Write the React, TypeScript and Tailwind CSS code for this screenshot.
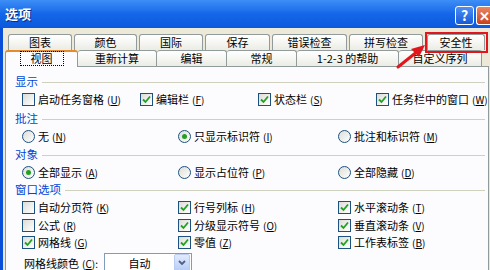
import React from 'react'

const font = { fontFamily: '"Noto Sans CJK SC", "Liberation Sans", sans-serif' }

const row1 = [
	{ label: '图表', w: 64 },
	{ label: '颜色', w: 63 },
	{ label: '国际', w: 64 },
	{ label: '保存', w: 65 },
	{ label: '错误检查', w: 75 },
	{ label: '拼写检查', w: 74 },
]

const row2 = [
	{ label: '重新计算', w: 79 },
	{ label: '编辑', w: 70 },
	{ label: '常规', w: 70 },
	{ label: '1-2-3 的帮助', w: 102 },
	{ label: '自定义序列', w: 83 },
]

const Label = ({ text, k }: { text: string; k: string }) => (
	<span className="whitespace-nowrap text-[11px] leading-none text-black">
		{text}
		<span className="text-[10px] ml-[3px]">
			(<u>{k}</u>)
		</span>
	</span>
)

const Check = ({ on }: { on?: boolean }) => (
	<span className="w-[13px] h-[13px] border border-[#1c5180] bg-gradient-to-br from-[#dcdcd7] to-white flex items-center justify-center shrink-0">
		{on && (
			<svg width="9" height="9" viewBox="0 0 9 9">
				<path d="M1 4.5 L3.5 7 L8 1.5" stroke="#21a121" strokeWidth="1.8" fill="none" />
			</svg>
		)}
	</span>
)

const Radio = ({ on }: { on?: boolean }) => (
	<span className="w-[13px] h-[13px] rounded-full border border-[#1c5180] bg-gradient-to-br from-[#dcdcd7] to-white flex items-center justify-center shrink-0">
		{on && <span className="w-[5px] h-[5px] rounded-full bg-[#21a121]" />}
	</span>
)

const CheckItem = ({ text, k, on }: { text: string; k: string; on?: boolean }) => (
	<div className="flex items-center gap-[3px] h-[17px]">
		<Check on={on} />
		<Label text={text} k={k} />
	</div>
)

const RadioItem = ({ text, k, on }: { text: string; k: string; on?: boolean }) => (
	<div className="flex items-center gap-[3px] h-[17px]">
		<Radio on={on} />
		<Label text={text} k={k} />
	</div>
)

const Heading = ({ text, className }: { text: string; className?: string }) => (
	<div className={`flex items-center gap-[4px] h-[18px] pl-[9px] pr-[3px] ${className ?? ''}`}>
		<span className="text-[11.5px] leading-none text-[#0046d5]">{text}</span>
		<span className="flex-1 h-px bg-[#d0d0bf]" />
	</div>
)

const tabCls =
	'h-[16px] border border-b-0 border-[#919b9c] rounded-t-[3px] bg-gradient-to-b from-white to-[#ecece5] text-[11px] leading-[15px] text-center text-black whitespace-nowrap'

const App = () => {
	return (
		<div className="relative w-[490px] h-[270px] overflow-hidden bg-[#0a4fd8]" style={font}>
			{/* title bar */}
			<div className="h-[28px] flex items-center justify-between pl-[5px] bg-gradient-to-b from-[#3d8ef6] via-[#1566e8] to-[#0b58dc]">
				<span className="text-white font-bold text-[13px] [text-shadow:1px_1px_0_#0a2a88]">选项</span>
				<div className="flex items-center gap-[2px] pt-[2px]">
					<span className="w-[19px] h-[19px] rounded-[3px] border border-white bg-gradient-to-b from-[#4d8ff5] to-[#1659d8] text-white text-[14px] font-bold leading-none flex items-center justify-center">
						?
					</span>
					<span className="w-[14px] h-[19px] rounded-l-[3px] border border-r-0 border-white bg-gradient-to-b from-[#e8865e] to-[#c8401c] text-white text-[13px] font-bold leading-none flex items-center pl-[2px] overflow-hidden">
						✕
					</span>
				</div>
			</div>

			{/* body */}
			<div className="ml-[3px] h-[242px] bg-[#ece9d8] pt-[6px]">
				{/* tab row 1 */}
				<div className="flex gap-[2px] pl-[5px] h-[16px]">
					{row1.map((t) => (
						<div key={t.label} style={{ width: t.w }} className={tabCls}>
							{t.label}
						</div>
					))}
					<div className={`ml-[2px] w-[58px] ${tabCls}`}>安全性</div>
				</div>
				{/* tab row 2 */}
				<div className="flex pl-[2px] h-[16px] items-end">
					<div className="relative z-10 w-[73px] h-[17px] -mb-px border border-b-0 border-[#919b9c] border-t-[2px] border-t-[#e68b2c] rounded-t-[3px] bg-[#fcfcfe] flex justify-center">
						<span className="px-[10px] h-[13px] text-[11px] leading-[13px] outline outline-1 outline-dotted outline-black text-black">视图</span>
					</div>
					{row2.map((t) => (
						<div key={t.label} style={{ width: t.w }} className={`${tabCls} border-l-0`}>
							{t.label}
						</div>
					))}
				</div>

				{/* panel */}
				<div className="ml-[2px] w-[484px] h-[210px] border border-[#919b9c] bg-[#fcfcfe] pt-[6px]">
					<Heading text="显示" />
					<div className="grid grid-cols-[118px_118px_118px_1fr] pl-[16px]">
						<CheckItem text="启动任务窗格" k="U" />
						<CheckItem text="编辑栏" k="F" on />
						<CheckItem text="状态栏" k="S" on />
						<CheckItem text="任务栏中的窗口" k="W" on />
					</div>

					<Heading text="批注" className="mt-[2px]" />
					<div className="grid grid-cols-[156px_160px_1fr] pl-[16px]">
						<RadioItem text="无" k="N" />
						<RadioItem text="只显示标识符" k="I" on />
						<RadioItem text="批注和标识符" k="M" />
					</div>

					<Heading text="对象" className="mt-[1px]" />
					<div className="grid grid-cols-[156px_160px_1fr] pl-[16px]">
						<RadioItem text="全部显示" k="A" on />
						<RadioItem text="显示占位符" k="P" />
						<RadioItem text="全部隐藏" k="D" />
					</div>

					<Heading text="窗口选项" />
					<div className="grid grid-cols-[156px_160px_1fr] pl-[16px] gap-y-[0.5px]">
						<CheckItem text="自动分页符" k="K" />
						<CheckItem text="行号列标" k="H" on />
						<CheckItem text="水平滚动条" k="T" on />
						<CheckItem text="公式" k="R" />
						<CheckItem text="分级显示符号" k="O" on />
						<CheckItem text="垂直滚动条" k="V" on />
						<CheckItem text="网格线" k="G" on />
						<CheckItem text="零值" k="Z" on />
						<CheckItem text="工作表标签" k="B" on />
					</div>

					<div className="flex items-center mt-[2px] pl-[18px] gap-[4px]">
						<span className="whitespace-nowrap text-[11px] leading-none text-black">
							网格线颜色
							<span className="text-[10px] ml-[3px]">
								(<u>C</u>):
							</span>
						</span>
						<div className="ml-[2px] w-[88px] h-[20px] border border-[#7f9db9] bg-white flex items-center">
							<span className="flex-1 text-center text-[11px] leading-none text-black">自动</span>
							<span className="w-[16px] h-[18px] border border-[#bbcbf0] rounded-[2px] bg-gradient-to-b from-[#e2ebfd] to-[#b6cbf6] flex items-center justify-center mr-px">
								<svg width="8" height="6" viewBox="0 0 8 6">
									<path d="M1 1 L4 4 L7 1" stroke="#4d6185" strokeWidth="1.8" fill="none" />
								</svg>
							</span>
						</div>
					</div>
				</div>
			</div>

			{/* annotation: red box and arrow */}
			<div className="absolute left-[425px] top-[32px] w-[63px] h-[21px] border-2 border-[#e0161c]" />
			<svg className="absolute left-0 top-0" width="490" height="270" viewBox="0 0 490 270">
				<path d="M398 67 L418 51" stroke="#e0161c" strokeWidth="3" strokeLinecap="round" />
				<path d="M425 45 L411 49 L419 57 Z" fill="#e0161c" />
			</svg>
		</div>
	)
}

export default App
